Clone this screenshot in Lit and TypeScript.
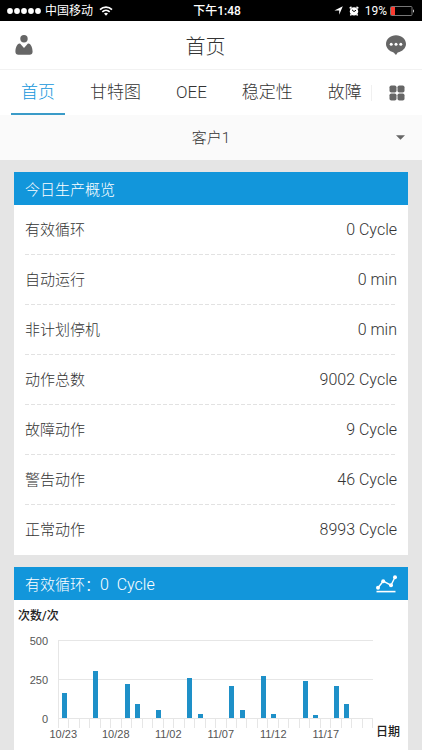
import { LitElement, html, css, svg } from "lit";
import { customElement, property, state } from "lit/decorators.js";
import { classMap } from "lit/directives/class-map.js";

const CHART_MAX = 500;

@customElement("status-bar")
class StatusBar extends LitElement {
  static styles = css`
    :host {
      display: grid;
      grid-template-columns: 1fr auto 1fr;
      align-items: center;
      height: 21px;
      padding: 0 7px;
      background: #000;
      color: #fff;
      font-family: Roboto, "Noto Sans CJK SC", sans-serif;
      font-size: 12px;
      font-weight: 400;
      line-height: 20px;
    }
    .side {
      display: flex;
      align-items: center;
      gap: 6px;
    }
    .carrier {
      display: flex;
      align-items: center;
      gap: 4px;
    }
    .time {
      font-weight: 500;
      padding-left: 12px;
    }
    .right {
      justify-content: flex-end;
    }
    .power {
      display: flex;
      align-items: center;
      gap: 3px;
    }
    svg {
      display: block;
    }
  `;

  render() {
    return html`
      <div class="side">
        <div class="carrier">
          <svg width="34" height="6" viewBox="0 0 34 6" fill="#fff">
            ${[3, 10, 17, 24, 31].map((x) => svg`<circle cx=${x} cy="3" r="2.9" />`)}
          </svg>
          <span>中国移动</span>
        </div>
        <svg width="14" height="10" viewBox="0 0 14 10" fill="none" stroke="#fff">
          <path d="M1 3.6C4.4.3 9.6.3 13 3.6" stroke-width="1.7" />
          <path d="M3.3 5.9c2.1-2 5.3-2 7.4 0" stroke-width="1.6" />
          <path d="M5 7.6c1.1-1.1 2.9-1.1 4 0L7 9.7z" fill="#fff" stroke="none" />
        </svg>
      </div>
      <div class="time">下午1:48</div>
      <div class="side right">
        <svg width="9" height="9" viewBox="0 0 9 9"><path d="M8.8.2 5.2 8.8V4.4H.4z" fill="#fff" /></svg>
        <svg width="10" height="10" viewBox="0 0 10 10">
          <circle cx="5" cy="5.4" r="4.2" fill="#fff" />
          <path d="M.7 2.4 2.5.8M9.3 2.4 7.5.8M2.3 8.3 1.4 9.5M7.7 8.3l.9 1.2" stroke="#fff" stroke-width="1.5" />
          <path d="M3 3.8 5 5.6 7 4.2" stroke="#000" stroke-width="1" fill="none" />
        </svg>
        <div class="power">
          <span>19%</span>
          <svg width="25" height="10" viewBox="0 0 25 10">
            <rect x=".5" y=".5" width="21.5" height="9" rx="1" fill="none" stroke="#777" />
            <rect x="1" y="1" width="4" height="8" fill="#fb3b30" />
            <path d="M23 3.3c1.4.4 1.4 3 0 3.4z" fill="#ccc" />
          </svg>
        </div>
      </div>
    `;
  }
}

@customElement("stat-card")
class StatCard extends LitElement {
  @property({ attribute: false }) rows: [string, string][] = [];

  static styles = css`
    :host {
      display: block;
      background: #fff;
    }
    .head {
      display: flex;
      align-items: center;
      height: 33px;
      margin: 0;
      padding: 0 11px;
      background: #1296db;
      color: #fff;
      font-size: 15px;
      font-weight: 300;
    }
    .list {
      margin: 0;
      padding: 0 11px;
    }
    .row {
      display: flex;
      align-items: baseline;
      justify-content: space-between;
      height: 50px;
      line-height: 50px;
      background: repeating-linear-gradient(90deg, #e2e2e2 0 4px, transparent 4px 6px) bottom / 100% 1px no-repeat;
    }
    .row:last-child {
      background: none;
    }
    .name {
      font-size: 15px;
    }
    .value {
      margin: 0;
      font-size: 16px;
    }
  `;

  render() {
    return html`
      <h2 class="head">今日生产概览</h2>
      <dl class="list">
        ${this.rows.map(
          ([name, value]) =>
            html`<div class="row"><dt class="name">${name}</dt><dd class="value">${value}</dd></div>`
        )}
      </dl>
    `;
  }
}

@customElement("cycle-chart")
class CycleChart extends LitElement {
  @property({ attribute: false }) values: number[] = [];
  @property({ attribute: false }) labels: string[] = [];

  static styles = css`
    :host {
      display: block;
      background: #fff;
    }
    .head {
      display: flex;
      align-items: center;
      justify-content: space-between;
      height: 33px;
      padding: 0 11px;
      background: #1296db;
      color: #fff;
    }
    .title {
      margin: 0;
      font-size: 15px;
      font-weight: 300;
      white-space: pre;
    }
    .amount {
      font-size: 16px;
    }
    .switch {
      border: 0;
      padding: 0;
      background: none;
    }
    svg {
      display: block;
    }
    .unit {
      font-size: 12px;
      font-weight: 500;
      line-height: 16px;
      color: #222;
    }
    .top {
      padding: 8px 4px 16px;
    }
    .chart {
      display: grid;
      grid-template-columns: 34px 1fr 27px;
      column-gap: 10px;
      color: #555;
      font-family: "Liberation Sans", "Noto Sans CJK SC", sans-serif;
    }
    .scale {
      display: flex;
      flex-direction: column;
      justify-content: space-between;
      height: 92px;
      margin-top: -6px;
      font-size: 11px;
      line-height: 14px;
      text-align: right;
    }
    .plot {
      display: flex;
      flex-direction: column;
      margin-right: -2px;
    }
    .area {
      display: flex;
      height: 78px;
      border-left: 1px solid #e6e6e6;
      background:
        linear-gradient(#e6e6e6, #e6e6e6) 0 0 / 100% 1px no-repeat,
        linear-gradient(#e6e6e6, #e6e6e6) 0 50% / 100% 1px no-repeat;
    }
    .slot {
      flex: 1;
      display: flex;
      align-items: flex-end;
      justify-content: center;
    }
    .bar {
      width: 5px;
      background: #1e90c8;
    }
    .ticks {
      display: flex;
      height: 9px;
      border: 1px solid #e6e6e6;
      border-bottom: 0;
    }
    .tick {
      flex: 1;
    }
    .tick + .tick {
      border-left: 1px solid #e6e6e6;
    }
    .dates {
      display: flex;
      font-size: 11px;
      line-height: 12px;
    }
    .group {
      flex: 1;
    }
    .date {
      display: flex;
      justify-content: center;
      width: 20%;
      white-space: nowrap;
    }
    .xunit {
      align-self: end;
      margin-left: -5px;
    }
  `;

  render() {
    return html`
      <div class="head">
        <h2 class="title">有效循环：<span class="amount">0  Cycle</span></h2>
        <button class="switch" aria-label="折线图">
          <svg width="21" height="18" viewBox="0 0 21 18" fill="none" stroke="#fff">
            <path d="M2 12.8 7.2 6.2 15 10.2 19 2.2" stroke-width="1.4" />
            <g fill="#fff" stroke="none">
              <circle cx="2" cy="12.8" r="2" />
              <circle cx="7.2" cy="6.2" r="2" />
              <circle cx="15" cy="10.2" r="2" />
              <circle cx="19" cy="2.2" r="2" />
            </g>
            <path d="M.5 16.6h19" stroke-width="1.6" />
          </svg>
        </button>
      </div>
      <div class="top unit">次数/次</div>
      <div class="chart">
        <div class="scale"><span>500</span><span>250</span><span>0</span></div>
        <div class="plot">
          <div class="area">
            ${this.values.map(
              (v) => html`<div class="slot">
                ${v ? html`<div class="bar" style="height:${(v / CHART_MAX) * 100}%"></div>` : ""}
              </div>`
            )}
          </div>
          <div class="ticks">${this.values.map(() => html`<div class="tick"></div>`)}</div>
          <div class="dates">
            ${this.labels.map((l) => html`<div class="group"><span class="date">${l}</span></div>`)}
          </div>
        </div>
        <div class="xunit unit">日期</div>
      </div>
    `;
  }
}

@customElement("app-root")
class AppRoot extends LitElement {
  @state() private tab = 0;

  private tabs = ["首页", "甘特图", "OEE", "稳定性", "故障"];

  private rows: [string, string][] = [
    ["有效循环", "0 Cycle"],
    ["自动运行", "0 min"],
    ["非计划停机", "0 min"],
    ["动作总数", "9002 Cycle"],
    ["故障动作", "9 Cycle"],
    ["警告动作", "46 Cycle"],
    ["正常动作", "8993 Cycle"],
  ];

  private cycles = [
    160, 0, 0, 304, 0, 0, 220, 88, 0, 54, 0, 0, 257, 28, 0, 0, 207, 54, 0, 270, 28, 0, 0, 238, 20, 0, 207, 92, 0, 0,
  ];

  private dates = ["10/23", "10/28", "11/02", "11/07", "11/12", "11/17"];

  static styles = css`
    :host {
      display: flex;
      flex-direction: column;
      min-height: 100vh;
      background: #e5e5e5;
      color: #333;
      font-family: Roboto, "Noto Sans CJK SC", sans-serif;
      font-weight: 300;
    }
    .navbar {
      display: flex;
      align-items: center;
      justify-content: space-between;
      height: 48px;
      padding: 0 15px;
      background: #fff;
      border-bottom: 1px solid #f2f2f2;
    }
    .title {
      margin: 0;
      font-size: 20px;
      font-weight: 300;
    }
    .icon {
      border: 0;
      padding: 0;
      background: none;
    }
    .message {
      padding-left: 7px;
    }
    svg {
      display: block;
    }
    .tabbar {
      display: flex;
      align-items: center;
      height: 45px;
      background: #fff;
    }
    .tabs {
      flex: 1;
      min-width: 0;
      display: flex;
      gap: 15px;
      padding-left: 11px;
      overflow: hidden;
    }
    .tab {
      flex: none;
      padding: 2px 10px 0;
      border-bottom: 2px solid transparent;
      color: inherit;
      font-size: 17px;
      line-height: 41px;
      text-decoration: none;
    }
    .tab.active {
      color: #1296db;
      border-color: #3a9bc8;
    }
    .more {
      padding: 0 17px;
      border-left: 1px solid #f0f0f0;
    }
    .picker {
      display: grid;
      align-items: center;
      height: 45px;
      background: #fafafa;
    }
    .select {
      grid-area: 1 / 1;
      appearance: none;
      width: 100%;
      height: 45px;
      border: 0;
      background: none;
      color: inherit;
      font: inherit;
      font-size: 15px;
      text-align: center;
      text-align-last: center;
    }
    .caret {
      grid-area: 1 / 1;
      justify-self: end;
      margin-right: 17px;
      pointer-events: none;
    }
    .cards {
      flex: 1;
      display: flex;
      flex-direction: column;
      gap: 12px;
      padding: 12px 14px 0;
    }
    .chart {
      flex: 1;
    }
  `;

  private pick(event: Event, index: number) {
    event.preventDefault();
    this.tab = index;
  }

  render() {
    return html`
      <status-bar></status-bar>
      <header class="navbar">
        <button class="icon" aria-label="用户">
          <svg width="18" height="20" viewBox="0 0 18 20" fill="#666">
            <circle cx="9" cy="3.8" r="3.7" />
            <path d="M4.6 8.6c.6 0 1 .3 1.3.8L9 13l3.1-3.600c.3-.5.7-.8 1.300-.8 2.600.2 4.200 4.500 4.200 8 0 2.200-1.200 3.200-3 3.200H3.400c-1.800 0-3-1-3-3.200 0-3.500 1.600-7.800 4.200-8z" />
          </svg>
        </button>
        <h1 class="title">首页</h1>
        <button class="icon message" aria-label="消息">
          <svg width="22" height="20" viewBox="0 0 22 20">
            <path d="M11 .3c5.500 0 10 3.900 10 8.800 0 4-3.500 7.500-8.300 8.400L11 19.900 8.600 17.400C4.200 16.400 1 13 1 9.100 1 4.200 5.500.3 11 .3z" fill="#666" />
            <g fill="#fff">
              <circle cx="6.200" cy="9.200" r="1.500" />
              <circle cx="11" cy="9.200" r="1.500" />
              <circle cx="15.800" cy="9.200" r="1.500" />
            </g>
          </svg>
        </button>
      </header>
      <div class="tabbar">
        <nav class="tabs">
          ${this.tabs.map(
            (name, i) => html`<a
              href="#"
              class=${classMap({ tab: true, active: i === this.tab })}
              @click=${(e: Event) => this.pick(e, i)}
              >${name}</a
            >`
          )}
        </nav>
        <button class="icon more" aria-label="更多">
          <svg width="16" height="16" viewBox="0 0 16 16" fill="#666">
            <rect x=".5" y=".5" width="7" height="7" rx="1.8" />
            <rect x="8.5" y=".5" width="7" height="7" rx="1.8" />
            <rect x=".5" y="8.5" width="7" height="7" rx="1.8" />
            <rect x="8.5" y="8.5" width="7" height="7" rx="1.8" />
          </svg>
        </button>
      </div>
      <div class="picker">
        <select class="select" aria-label="客户">
          <option>客户1</option>
        </select>
        <svg class="caret" width="9" height="5" viewBox="0 0 9 5"><path d="M0 .3h9L4.5 4.7z" fill="#666" /></svg>
      </div>
      <main class="cards">
        <stat-card .rows=${this.rows}></stat-card>
        <cycle-chart class="chart" .values=${this.cycles} .labels=${this.dates}></cycle-chart>
      </main>
    `;
  }
}
